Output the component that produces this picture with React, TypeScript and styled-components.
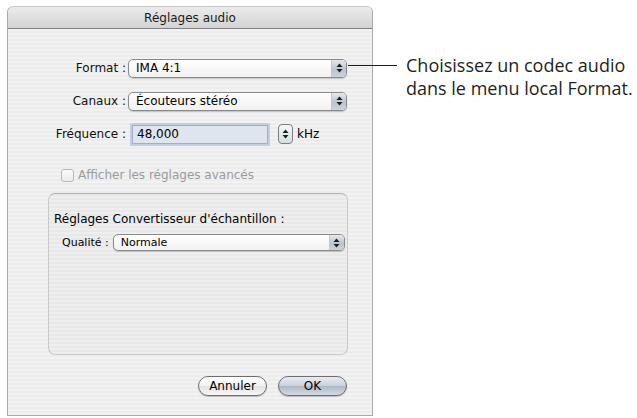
import * as React from 'react';
import styled, { createGlobalStyle } from 'styled-components';

const GlobalStyle = createGlobalStyle`
  html, body {
    margin: 0;
    padding: 0;
    background: #ffffff;
  }
  body {
    font-family: "DejaVu Sans", "Liberation Sans", sans-serif;
    font-size: 12px;
    color: #000;
  }
`;

const Page = styled.div`
  display: flex;
  align-items: flex-start;
  padding: 6px 0 0 7px;
`;

const Window = styled.div`
  box-sizing: border-box;
  width: 366px;
  height: 410px;
  display: flex;
  flex-direction: column;
  border: 1px solid #a9a9a9;
  border-top-color: #c4c4c4;
  border-radius: 6px 6px 0 0;
  overflow: hidden;
  background: repeating-linear-gradient(
    to bottom,
    #ececec 0px,
    #ececec 2px,
    #f2f2f2 2px,
    #f2f2f2 4px
  );
`;

const TitleBar = styled.div`
  height: 21px;
  flex: 0 0 auto;
  display: flex;
  align-items: center;
  justify-content: center;
  background: linear-gradient(to bottom, #ebebeb, #d3d3d3);
  border-bottom: 1px solid #7f7f7f;
  font-size: 12px;
  color: #1a1a1a;
`;

const Body = styled.div`
  flex: 1;
  display: flex;
  flex-direction: column;
  padding: 29px 0 0 0;
`;

const Form = styled.div`
  display: flex;
  flex-direction: column;
  gap: 13px;
`;

const Row = styled.div`
  display: flex;
  align-items: center;
  height: 20px;
`;

const Label = styled.span`
  width: 118px;
  text-align: right;
  white-space: nowrap;
  margin-right: 2px;
  color: #111;
`;

const PopupBox = styled.div<{ $small?: boolean; $width: number }>`
  box-sizing: border-box;
  width: ${({ $width }) => $width}px;
  height: ${({ $small }) => ($small ? 17 : 19)}px;
  display: flex;
  align-items: stretch;
  border: 1px solid #8a8a8a;
  border-radius: 5px;
  background: linear-gradient(to bottom, #ffffff, #f1f1f1);
  box-shadow: 0 1px 1px rgba(0, 0, 0, 0.18);
  overflow: hidden;
`;

const PopupText = styled.span<{ $small?: boolean }>`
  flex: 1;
  display: flex;
  align-items: center;
  padding-left: 7px;
  font-size: ${({ $small }) => ($small ? 11 : 12)}px;
  white-space: nowrap;
`;

const ArrowBox = styled.span`
  width: 14px;
  display: flex;
  align-items: center;
  justify-content: center;
  border-left: 1px solid #c3c7cd;
  background: linear-gradient(to bottom, #e6e9ee, #bcc4cf 55%, #cdd3db);
`;

const Arrows = () => (
  <svg width="7" height="10" viewBox="0 0 7 10">
    <path d="M3.5 0.5 L6.5 4 L0.5 4 Z" fill="#1e1e1e" />
    <path d="M3.5 9.5 L6.5 6 L0.5 6 Z" fill="#1e1e1e" />
  </svg>
);

const Popup: React.FC<{ value: string; width: number; small?: boolean }> = ({ value, width, small }) => (
  <PopupBox $width={width} $small={small}>
    <PopupText $small={small}>{value}</PopupText>
    <ArrowBox>
      <Arrows />
    </ArrowBox>
  </PopupBox>
);

const Field = styled.div`
  box-sizing: border-box;
  width: 136px;
  height: 19px;
  margin-left: 4px;
  display: flex;
  align-items: center;
  padding-left: 4px;
  background: #dfe5ee;
  border: 1px solid #9fb0c6;
  box-shadow: 0 0 0 2px #c3cfdf;
`;

const Stepper = styled.div`
  box-sizing: border-box;
  width: 15px;
  height: 20px;
  margin-left: 10px;
  display: flex;
  align-items: center;
  justify-content: center;
  border: 1px solid #7d7d7d;
  border-radius: 4px;
  background: linear-gradient(to bottom, #f7f7f7, #d8dde4);
`;

const Unit = styled.span`
  margin-left: 4px;
`;

const CheckRow = styled.div`
  display: flex;
  align-items: center;
  height: 20px;
  margin: 21px 0 0 53px;
  color: #9b9b9b;
`;

const CheckBox = styled.span`
  box-sizing: border-box;
  width: 13px;
  height: 13px;
  margin-right: 4px;
  border: 1px solid #b8b8b8;
  border-radius: 3px;
  background: linear-gradient(to bottom, #fafafa, #ececec);
`;

const GroupBox = styled.div`
  box-sizing: border-box;
  width: 300px;
  height: 162px;
  margin: 8px 0 0 40px;
  padding: 17px 0 0 5px;
  border: 1px solid #c9c9c9;
  border-top-color: #b3b3b3;
  border-radius: 7px;
  background: repeating-linear-gradient(
    to bottom,
    #e8e8e8 0px,
    #e8e8e8 2px,
    #eeeeee 2px,
    #eeeeee 4px
  );
`;

const GroupTitle = styled.div`
  height: 16px;
  line-height: 16px;
  white-space: nowrap;
`;

const SmallRow = styled.div`
  display: flex;
  align-items: center;
  margin: 7px 0 0 8px;
  font-size: 11px;
`;

const SmallLabel = styled.span`
  margin-right: 4px;
`;

const Buttons = styled.div`
  display: flex;
  justify-content: flex-end;
  gap: 11px;
  margin-top: 21px;
  padding-right: 25px;
`;

const Button = styled.div<{ $primary?: boolean }>`
  box-sizing: border-box;
  width: 69px;
  height: 20px;
  display: flex;
  align-items: center;
  justify-content: center;
  border: 1px solid #6e6e6e;
  border-radius: 10px;
  font-size: 12px;
  background: ${({ $primary }) =>
    $primary
      ? 'linear-gradient(to bottom, #e9edf2 0%, #c9d0da 50%, #aeb8c6 51%, #d3dae3 100%)'
      : 'linear-gradient(to bottom, #ffffff 0%, #f2f2f2 50%, #e2e2e2 51%, #f7f7f7 100%)'};
  box-shadow: 0 1px 1px rgba(0, 0, 0, 0.2);
`;

const Callout = styled.div`
  display: flex;
  align-items: flex-start;
  margin-top: 48px;
`;

const Leader = styled.span`
  width: 49px;
  height: 1px;
  margin: 11px 0 0 -25px;
  background: #1c1c1c;
`;

const CalloutText = styled.div`
  margin-left: 9px;
  font-family: "Open Sans", "Noto Sans", sans-serif;
  font-size: 18px;
  line-height: 23px;
  color: #231f20;
  white-space: nowrap;
`;

export default function App() {
  return (
    <>
      <GlobalStyle />
      <Page>
        <Window>
          <TitleBar>Réglages audio</TitleBar>
          <Body>
            <Form>
              <Row>
                <Label>Format :</Label>
                <Popup value="IMA 4:1" width={219} />
              </Row>
              <Row>
                <Label>Canaux :</Label>
                <Popup value="Écouteurs stéréo" width={219} />
              </Row>
              <Row>
                <Label>Fréquence :</Label>
                <Field>48,000</Field>
                <Stepper>
                  <Arrows />
                </Stepper>
                <Unit>kHz</Unit>
              </Row>
            </Form>
            <CheckRow>
              <CheckBox />
              Afficher les réglages avancés
            </CheckRow>
            <GroupBox>
              <GroupTitle>Réglages Convertisseur d'échantillon :</GroupTitle>
              <SmallRow>
                <SmallLabel>Qualité :</SmallLabel>
                <Popup value="Normale" width={232} small />
              </SmallRow>
            </GroupBox>
            <Buttons>
              <Button>Annuler</Button>
              <Button $primary>OK</Button>
            </Buttons>
          </Body>
        </Window>
        <Callout>
          <Leader />
          <CalloutText>
            Choisissez un codec audio
            <br />
            dans le menu local Format.
          </CalloutText>
        </Callout>
      </Page>
    </>
  );
}
